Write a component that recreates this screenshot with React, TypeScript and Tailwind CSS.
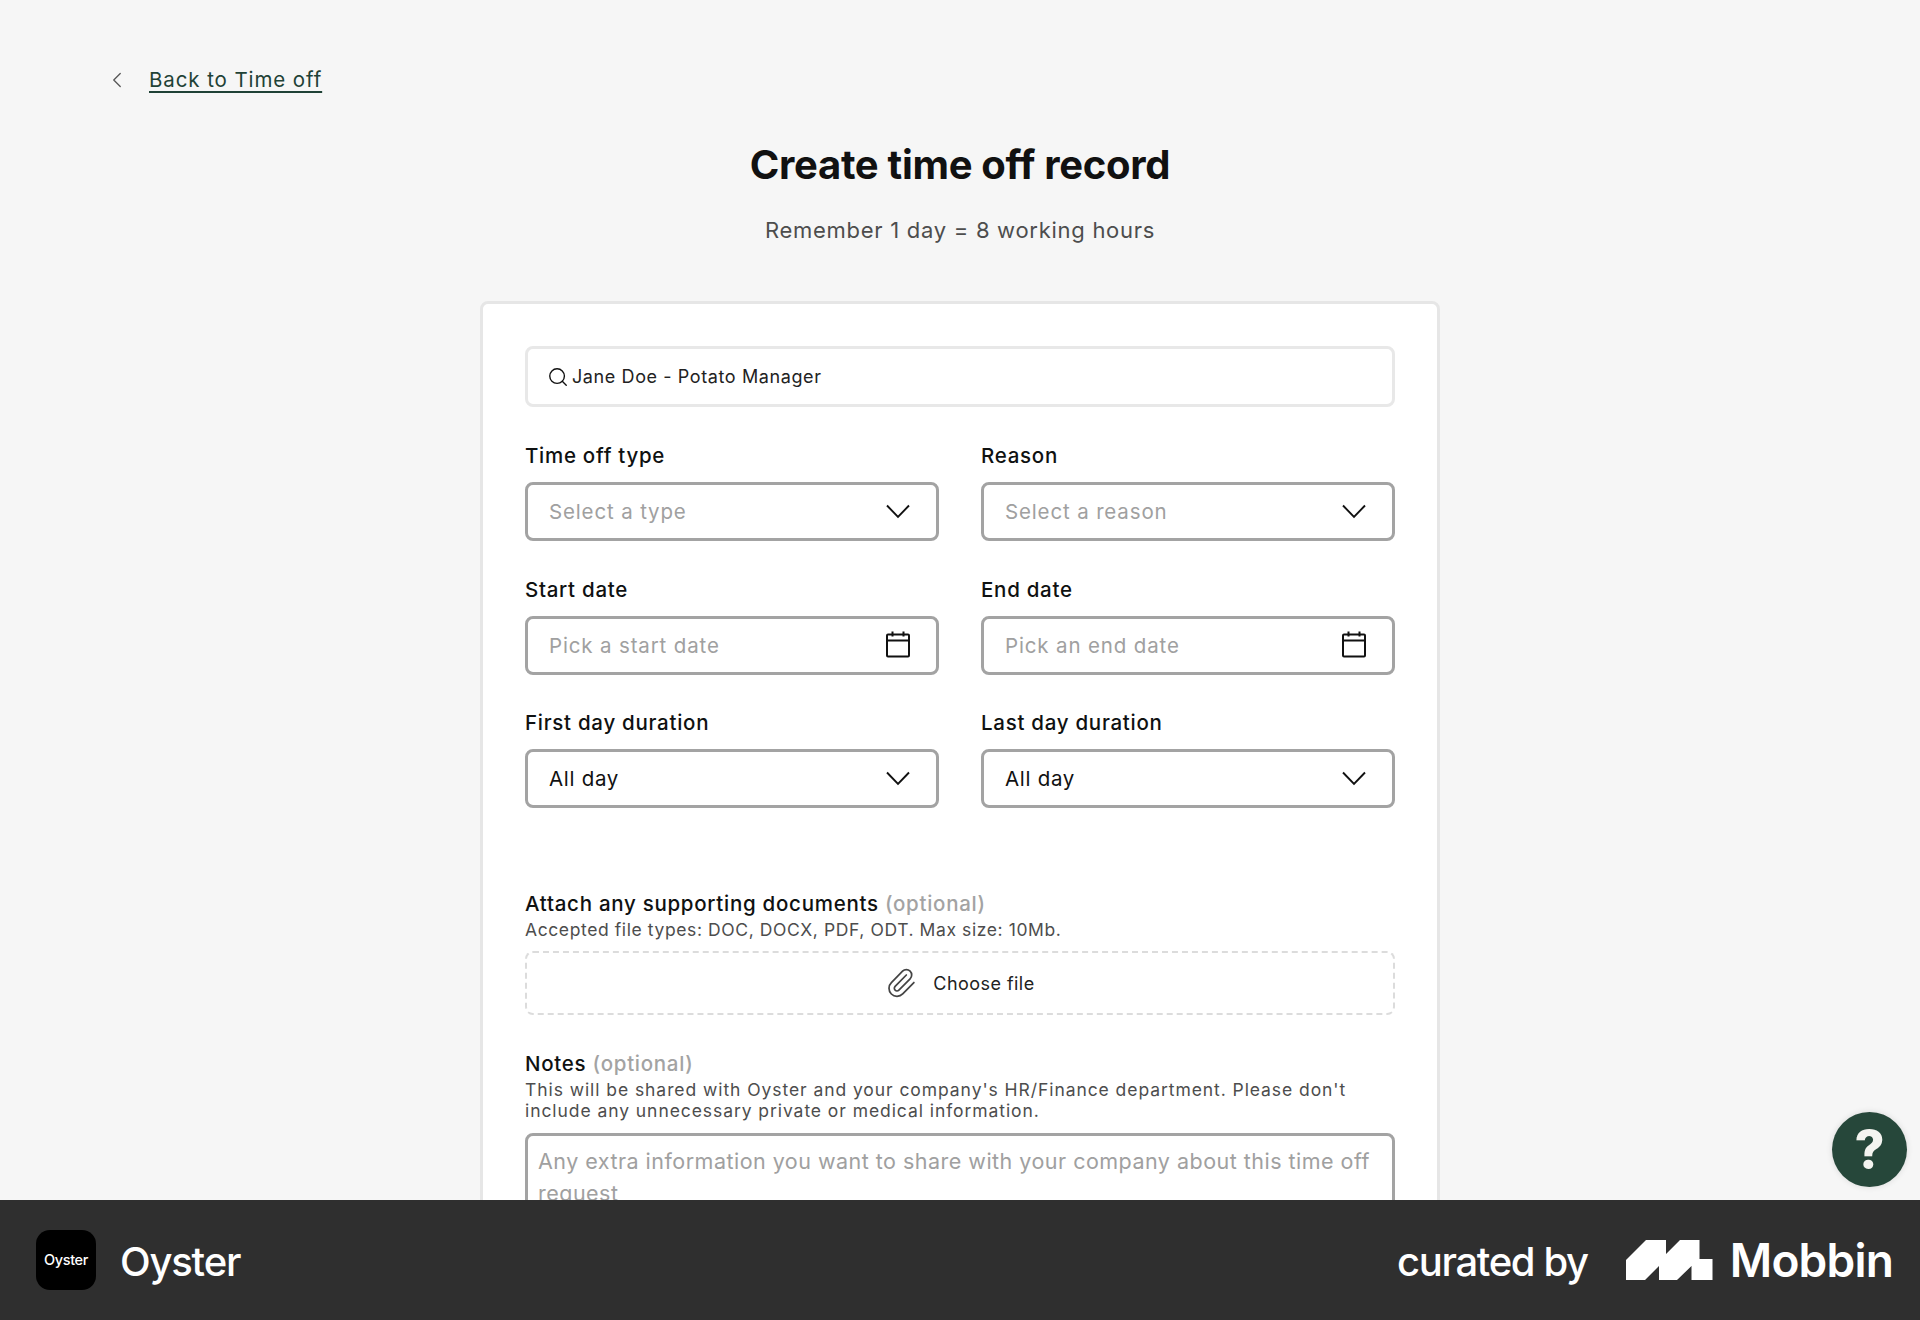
import { Search, ChevronLeft, Paperclip } from "lucide-react";

const font = "font-['Inter','Liberation_Sans',sans-serif]";

function CalendarIcon() {
  return (
    <svg width="26" height="28" viewBox="0 0 26 28" fill="none" stroke="#111" strokeWidth="2" className="shrink-0 mb-[2px]">
      <rect x="2" y="4.5" width="22" height="22" rx="1" />
      <path d="M2 10.5h22M7.5 1.5v5M18.5 1.5v5" />
    </svg>
  );
}

function Chevron() {
  return (
    <svg width="26" height="15" viewBox="0 0 26 15" fill="none" stroke="#111" strokeWidth="1.9" className="shrink-0">
      <path d="M2 1.5 13 13 24 1.5" />
    </svg>
  );
}

function Field({ label, value, placeholder, calendar }: { label: string; value?: string; placeholder?: string; calendar?: boolean }) {
  return (
    <div>
      <div className="pt-[1px] text-[20.5px] leading-[24px] font-[550] tracking-[0.72px] text-[#0f1111]">{label}</div>
      <div className="mt-[14px] h-[59px] rounded-[8px] border-[3px] border-[#a3a3a3] bg-white pl-[21px] pr-[25px] flex items-center justify-between">
        <span className={value ? "pt-[2px] text-[20.5px] tracking-[0.7px] text-[#111]" : "pt-[2px] text-[20.5px] tracking-[0.85px] text-[#a0a0a0]"}>{value ?? placeholder}</span>
        {calendar ? <CalendarIcon /> : <Chevron />}
      </div>
    </div>
  );
}

export default function App() {
  return (
    <div className={`${font} relative h-[1320px] flex flex-col bg-[#f6f6f6] overflow-hidden`}>
      <main className="flex-1 min-h-0 overflow-hidden">
        <div className="pl-[104px] pt-[66px] flex items-center h-[94px]">
          <ChevronLeft size={26} strokeWidth={1.2} className="text-[#555]" />
          <a href="#" className="ml-[19px] text-[20.5px] leading-[28px] tracking-[0.9px] text-[#1f4236] underline underline-offset-[4px]">Back to Time off</a>
        </div>
        <h1 className="mt-[47px] text-center text-[40px] leading-[48px] font-bold tracking-[-0.3px] text-[#111]">Create time off record</h1>
        <p className="mt-[26px] text-center text-[22px] leading-[30px] tracking-[0.72px] text-[#4d4d4d]">Remember 1 day = 8 working hours</p>

        <div className="mx-auto mt-[56px] w-[960px] rounded-[8px] border-[3px] border-[#e6e6e6] bg-white px-[42px] pt-[42px] pb-[60px]">
          <div className="h-[61px] rounded-[8px] border-[3px] border-[#e8e8e8] flex items-center pl-[19px] gap-[3px]">
            <Search size={22} strokeWidth={1.5} className="text-[#111]" />
            <span className="text-[18px] tracking-[0.6px] text-[#222]">Jane Doe - Potato Manager</span>
          </div>

          <div className="mt-[36px] grid grid-cols-2 gap-x-[42px] gap-y-[35.5px]">
            <Field label="Time off type" placeholder="Select a type" />
            <Field label="Reason" placeholder="Select a reason" />
            <Field label="Start date" placeholder="Pick a start date" calendar />
            <Field label="End date" placeholder="Pick an end date" calendar />
            <Field label="First day duration" value="All day" />
            <Field label="Last day duration" value="All day" />
          </div>

          <div className="mt-[84px] text-[20.5px] leading-[24px] font-[550] tracking-[0.72px] text-[#0f1111]">
            Attach any supporting documents <span className="text-[#a3a3a3]">(optional)</span>
          </div>
          <p className="mt-[3px] text-[17.5px] leading-[21px] tracking-[0.6px] text-[#4d4d4d]">Accepted file types: DOC, DOCX, PDF, ODT. Max size: 10Mb.</p>
          <div className="mt-[11px] h-[64px] rounded-[8px] border-2 border-dashed border-[#dcdcdc] flex items-center justify-center gap-[16px]">
            <Paperclip size={32} strokeWidth={1.3} className="text-[#444]" />
            <span className="text-[18px] tracking-[0.45px] text-[#222]">Choose file</span>
          </div>

          <div className="mt-[37px] text-[20.5px] leading-[24px] font-[550] tracking-[0.72px] text-[#0f1111]">
            Notes <span className="text-[#a3a3a3]">(optional)</span>
          </div>
          <p className="mt-[3px] text-[17.5px] leading-[21px] tracking-[0.93px] text-[#4d4d4d]">
            This will be shared with Oyster and your company's HR/Finance department. Please don't
            <br />
            include any unnecessary private or medical information.
          </p>
          <textarea
            readOnly
            placeholder="Any extra information you want to share with your company about this time off request"
            className="mt-[12px] block w-full h-[140px] resize-none rounded-[8px] border-[3px] border-[#a3a3a3] px-[10px] py-[9px] text-[21.5px] leading-[32px] tracking-[0.48px] placeholder:text-[#a0a0a0] outline-none"
          />
        </div>
      </main>

      <button className="absolute left-[1832px] top-[1112px] w-[75px] h-[75px] rounded-full bg-[#26473a] shadow-[0_0_6px_rgba(0,0,0,0.12)] flex items-center justify-center text-[#f4f4f0] text-[52px] leading-none font-extrabold">?</button>

      <footer className="h-[120px] shrink-0 bg-[#2f2f2f] flex items-center justify-between pl-[36px] pr-[27px]">
        <div className="flex items-center gap-[24px]">
          <div className="w-[60px] h-[60px] rounded-[14px] bg-black flex items-center justify-center text-white text-[14.5px] font-medium tracking-[-0.4px]">Oyster</div>
          <span className="pt-[3px] text-[40px] leading-none font-medium tracking-[-1.2px] text-white">Oyster</span>
        </div>
        <div className="flex items-center">
          <span className="pt-[3px] text-[40px] leading-none font-medium tracking-[-1.35px] text-white">curated by</span>
          <svg width="87" height="40" viewBox="0 0 87 40" fill="#fff" className="ml-[38px]">
            <polygon points="0,40 0,20 20,0 40,0 40,14 54,0 73.5,0 73.5,19 86.5,19 86.5,40 65.5,40 65.5,26 51,40 33,40 33,26 19,40" />
          </svg>
          <span className="ml-[17px] text-[46px] leading-none font-semibold tracking-[-0.8px] text-white">Mobbin</span>
        </div>
      </footer>
    </div>
  );
}
